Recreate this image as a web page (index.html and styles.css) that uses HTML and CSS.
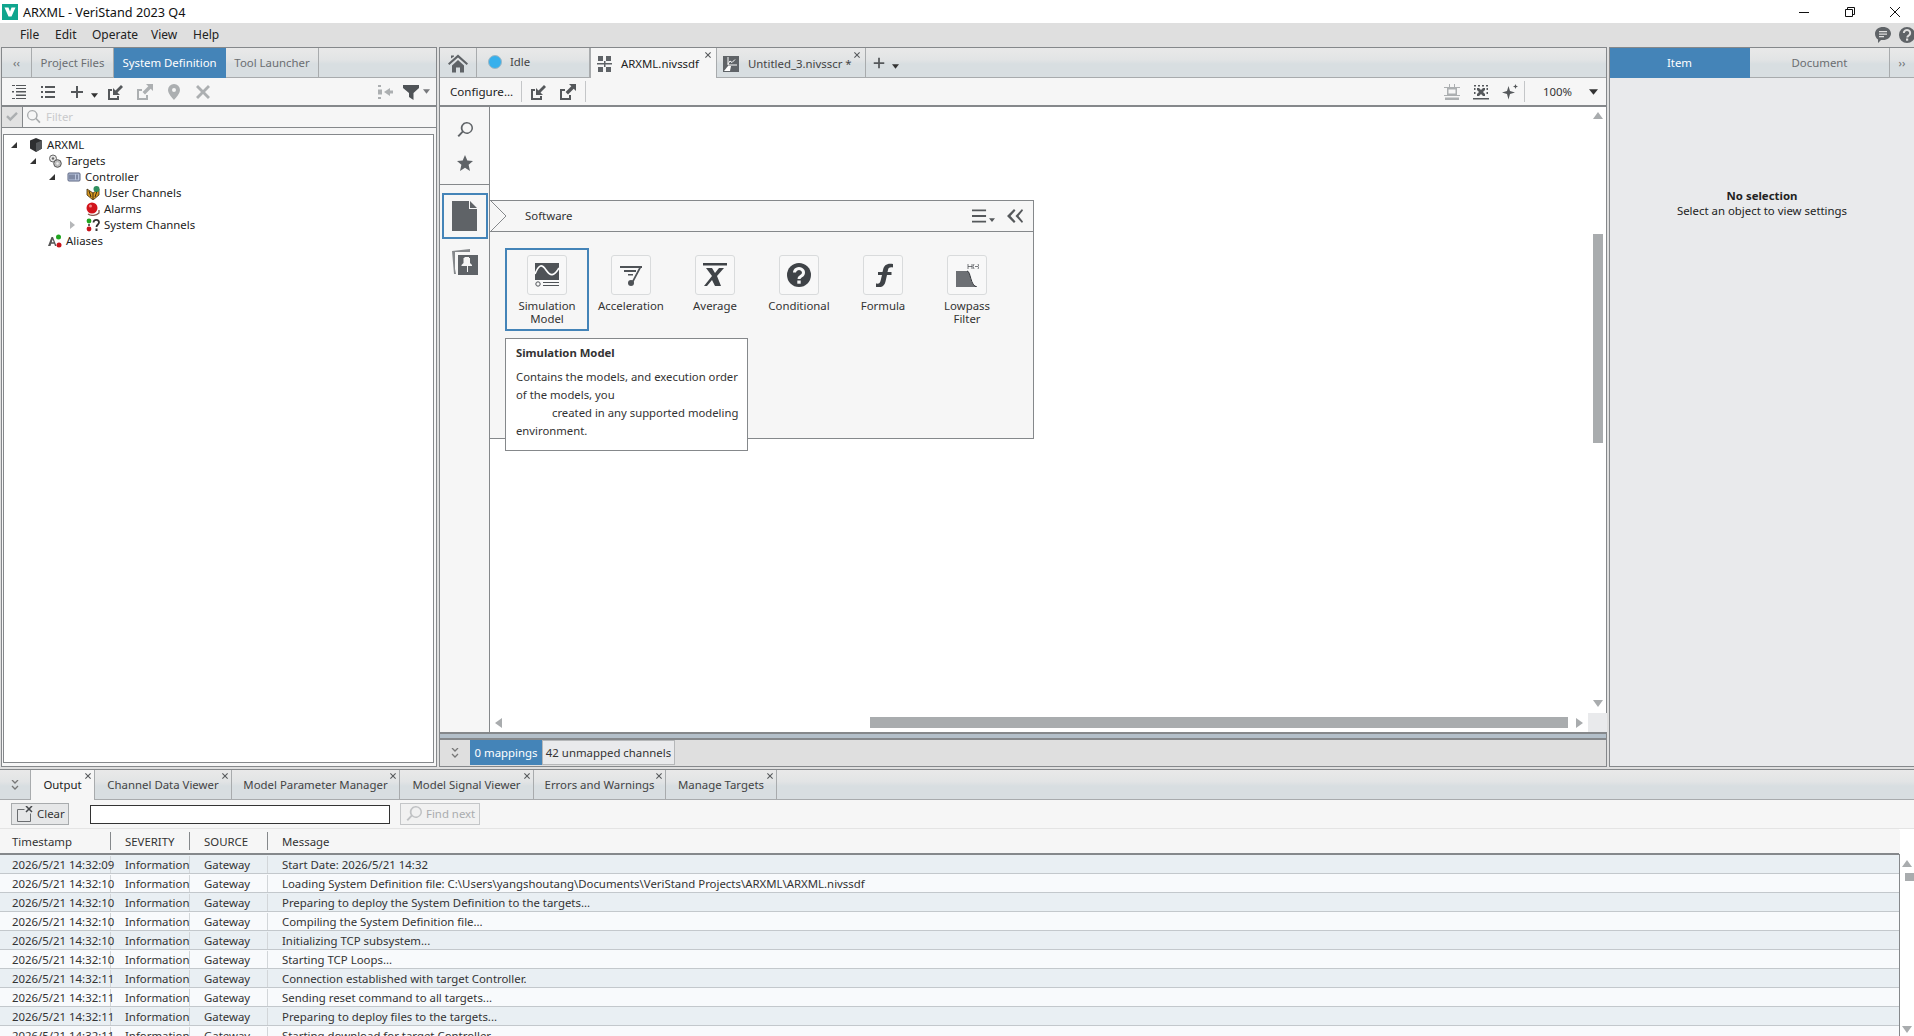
FILE: index.html
```html
<!DOCTYPE html>
<html lang="en">
<head>
<meta charset="utf-8">
<title>ARXML - VeriStand 2023 Q4</title>
<link rel="stylesheet" href="styles.css">
</head>
<body>
<svg class="sprite" aria-hidden="true">
  <symbol id="i-import" viewBox="0 0 16 16"><path d="M0 5h4v2H2v7h7v-2h2v4H0z"/><path d="M5 11V4l2.500 2.500L13 1l2 2-5.500 5.500L12 11z"/></symbol>
  <symbol id="i-export" viewBox="0 0 16 16"><path d="M0 5h5v2H2v7h7v-3h2v5H0z"/><path d="M16 0v7l-2.300-2.300L8 10.400 5.600 8l5.700-5.700L9 0z"/></symbol>
  <symbol id="i-expand" viewBox="0 0 16 16"><path d="M1 1h3v1H1zM1 14h3v1H1zM5 1h10v1H5zM5 4h10v1H5zM5 7h10v1.500H5zM5 10.500h10V12H5zM5 14h10v1H5zM1 7h2v1.500H1z"/></symbol>
  <symbol id="i-list" viewBox="0 0 16 16"><path d="M1 2h2v2H1zM5 2h10v2H5zM1 7h2v2H1zM5 7h10v2H5zM1 12h2v2H1zM5 12h10v2H5z"/></symbol>
  <symbol id="i-plus" viewBox="0 0 16 16"><path d="M7 2h2v5h5v2H9v5H7V9H2V7h5z"/></symbol>
  <symbol id="i-caret" viewBox="0 0 8 5"><path d="M0 0h8L4 5z"/></symbol>
  <symbol id="i-pin" viewBox="0 0 16 16"><path fill-rule="evenodd" d="M8 0a6 6 0 0 1 6 6c0 3.500-4 7.500-6 10-2-2.500-6-6.500-6-10a6 6 0 0 1 6-6zm0 4a2 2 0 1 0 0 4 2 2 0 0 0 0-4z"/></symbol>
  <symbol id="i-x" viewBox="0 0 16 16"><path d="M3 1l5 5 5-5 2 2-5 5 5 5-2 2-5-5-5 5-2-2 5-5-5-5z"/></symbol>
  <symbol id="i-collapse" viewBox="0 0 16 16"><path d="M7 8l6-4v2.500h3v3h-3V12zM1 1h3v2H1zM1 5.500h4v5H1zM1 13h3v2H1z" /></symbol>
  <symbol id="i-funnel" viewBox="0 0 16 16"><path d="M0 1h16v3l-5.500 5v7L6 13V9L0 4z"/></symbol>
  <symbol id="i-search" viewBox="0 0 16 16"><path fill-rule="evenodd" d="M10 0a6 6 0 1 1-3.900 10.600L2 15l-1.500-1.300 4.300-4.400A6 6 0 0 1 10 0zm0 1.500a4.500 4.500 0 1 0 0 9 4.500 4.500 0 0 0 0-9z"/></symbol>
  <symbol id="i-star" viewBox="0 0 16 16"><path d="M8 0l2.300 5.600 5.700.4-4.400 3.800L13 16 8 12.700 3 16l1.400-6.200L0 6l5.700-.4z"/></symbol>
  <symbol id="i-home" viewBox="0 0 20 18"><path d="M10 0l10 9-1.300 1.500L10 3 1.300 10.500 0 9zM3 4V1h3v1zM4 11l6-5.500 6 5.500v7h-4v-5H8v5H4z"/></symbol>
  <symbol id="i-doc" viewBox="0 0 25 30"><path d="M0 0h17v8h8v22H0zM18 0l7 7h-7z"/></symbol>
  <symbol id="i-pinned" viewBox="0 0 26 26"><path d="M0 2l18-2v3H3v17l1 5-2 0z" opacity=".75"/><path fill-rule="evenodd" d="M6 6h20v20H6zm11 2v1h1v5l2 2v1h-4v6h-1v-6H9.500v-1l2-2V9h1V8z"/></symbol>
  <symbol id="i-menu" viewBox="0 0 16 14"><path d="M0 0h15v2H0zM0 6h15v2H0zM0 12h15v2H0z"/></symbol>
  <symbol id="i-dbl" viewBox="0 0 16 14"><path d="M7 0l1.500 1.500L3.500 7l5 5.500L7 14 0 7zM15 0l1 1.500L11.500 7l4.500 5.500L15 14 8.500 7z"/></symbol>
  <symbol id="i-center" viewBox="0 0 16 16"><path d="M0 3h16v1H0zM5 0h1v3H5zM10 0h1v3h-1zM0 11h16v1H0zM1 13.500h14V16H1z"/><path fill-rule="evenodd" d="M3 4h10v7H3zm1.500 1.500v4h7v-4z"/></symbol>
  <symbol id="i-fit" viewBox="0 0 16 16"><path d="M1 1h2v1.500H1zM5 1h2v1.500H5zM9 1h2v1.500H9zM13 1h2v1.500h-2zM1 4h1.500v2H1zM13.500 4H15v2h-1.500zM1 8h1.500v2H1zM13.500 8H15v2h-1.500zM0 14h16v1.500H0z"/><path d="M4 4l2 0 2 2 2-2h2v2l-2 2 2 2v2h-2L8 10l-2 2H4v-2l2-2-2-2z"/></symbol>
  <symbol id="i-spark" viewBox="0 0 16 16"><path d="M6.500 2l1.500 5 5 1.500-5 1.500-1.500 5.500L5 10 0 8.500 5 7zM13.500 0l.7 1.800L16 2.500l-1.800.7-.7 1.800-.7-1.800-1.800-.7 1.800-.7z"/></symbol>
  <symbol id="i-close" viewBox="0 0 8 8"><path d="M0 1l1-1 3 3 3-3 1 1-3 3 3 3-1 1-3-3-3 3-1-1 3-3z"/></symbol>
  <symbol id="i-check" viewBox="0 0 14 12"><path d="M0 6l2-2 3 3 7-7 2 2-9 9z"/></symbol>
  <symbol id="i-dchev" viewBox="0 0 8 10"><path d="M1 0l3 3 3-3M1 6l3 3 3-3" fill="none" stroke="currentColor" stroke-width="1.300"/></symbol>
</svg>

<header class="titlebar">
  <svg class="logo" viewBox="0 0 16 16"><rect width="16" height="16" fill="#0fa58e"/><path d="M2.500 3.500h4l1.500 4 1.500-4h4L9.500 12.500h-3z" fill="#fff"/></svg>
  <span class="title">ARXML - VeriStand 2023 Q4</span>
  <div class="winctl">
    <svg class="win" viewBox="0 0 12 12"><path d="M1 6.500h10" stroke="#111" fill="none"/></svg>
    <svg class="win" viewBox="0 0 12 12"><path d="M1.500 3.500h7v7h-7zM3.500 3.500v-2h7v7h-2" stroke="#111" fill="none"/></svg>
    <svg class="win" viewBox="0 0 12 12"><path d="M1 1l10 10M11 1L1 11" stroke="#111" fill="none"/></svg>
  </div>
</header>

<nav class="menubar">
  <span class="menu m-file">File</span><span class="menu m-edit">Edit</span><span class="menu m-op">Operate</span><span class="menu m-view">View</span><span class="menu">Help</span>
  <div class="menu-right">
    <svg class="help-ic" viewBox="0 0 16 16"><path d="M8 0c4.400 0 8 2.700 8 6.500S12.400 13 8 13H6l-3 3v-3.600C1.200 11.300 0 9.200 0 6.500 0 2.700 3.600 0 8 0z" fill="#5f6367"/><path d="M4 4h8v1.300H4zM4 6.500h8v1.300H4zM4 9h5v1.200H4z" fill="#dfdfdf"/></svg>
    <svg class="help-ic" viewBox="0 0 16 16"><circle cx="8" cy="8" r="8" fill="#5f6367"/><path d="M4.800 6a3.200 3 0 1 1 4.800 2.600c-1 .6-1.300 1-1.300 2" fill="none" stroke="#dfdfdf" stroke-width="2"/><rect x="7" y="11.500" width="2.200" height="2.200" fill="#dfdfdf"/></svg>
  </div>
</nav>

<main class="workspace">
  <section class="pane left">
    <div class="tabs">
      <span class="tab collapse">‹‹</span>
      <span class="tab w-project">Project Files</span>
      <span class="tab on w-sysdef">System Definition</span>
      <span class="tab w-tool">Tool Launcher</span>
    </div>
    <div class="toolbar">
      <span class="tool"><svg class="ic"><use href="#i-expand"/></svg></span>
      <span class="tool"><svg class="ic"><use href="#i-list"/></svg></span>
      <span class="tool"><svg class="ic"><use href="#i-plus"/></svg></span>
      <span class="caretbox"><svg class="caret"><use href="#i-caret"/></svg></span>
      <span class="tool"><svg class="ic"><use href="#i-import"/></svg></span>
      <span class="tool off"><svg class="ic"><use href="#i-export"/></svg></span>
      <span class="tool off"><svg class="ic"><use href="#i-pin"/></svg></span>
      <span class="tool off"><svg class="ic"><use href="#i-x"/></svg></span>
      <span class="spacer"></span>
      <span class="tool off"><svg class="ic"><use href="#i-collapse"/></svg></span>
      <span class="tool funnel"><svg class="ic"><use href="#i-funnel"/></svg></span>
      <span class="caretbox off"><svg class="caret"><use href="#i-caret"/></svg></span>
    </div>
    <div class="filter">
      <span class="check"><svg class="check-ic"><use href="#i-check"/></svg></span>
      <span class="filter-input"><svg class="filter-ic"><use href="#i-search"/></svg>Filter</span>
    </div>
    <div class="tree">
      <div class="node l0"><span class="arr open"></span>
        <svg class="ti" viewBox="0 0 14 14"><path d="M7 0l6 2.500v8L7 14 1 10.500v-8z" fill="#2e2f31"/><path d="M7 5l6-2.500v8L7 14z" fill="#55585b"/></svg><span>ARXML</span></div>
      <div class="node l1"><span class="arr open"></span>
        <svg class="ti" viewBox="0 0 14 14"><circle cx="5" cy="4.500" r="3.500" fill="#e5e5e5" stroke="#666"/><circle cx="9.500" cy="9.500" r="3.800" fill="#bbb" stroke="#555"/><circle cx="5" cy="4.500" r="1.200" fill="#666"/><circle cx="9.500" cy="9.500" r="1.200" fill="#eee"/></svg><span>Targets</span></div>
      <div class="node l2"><span class="arr open"></span>
        <svg class="ti" viewBox="0 0 14 14"><rect x="1" y="3" width="12" height="8" rx="1" fill="#b9c4dc" stroke="#5a6480"/><path d="M3 4.500v5M5 4.500v5M7 4.500v5M10 4.500v5" stroke="#46506c"/></svg><span>Controller</span></div>
      <div class="node l3"><span class="arr"></span>
        <svg class="ti" viewBox="0 0 14 14"><path d="M1 3l6 4 6-4v6l-6 5-6-5z" fill="#d99a22" stroke="#3b2c10" stroke-width=".8"/><path d="M3 5l2 6M7 7v6M11 5l-2 6" stroke="#3b2c10"/><circle cx="10.500" cy="3" r="3" fill="#2f8f5f"/></svg><span>User Channels</span></div>
      <div class="node l3"><span class="arr"></span>
        <svg class="ti" viewBox="0 0 14 14"><circle cx="6" cy="6" r="5.500" fill="#d2141c"/><circle cx="4.500" cy="4" r="1.500" fill="#f28a8a"/><path d="M2 12c3 2 8 2 11-1V8" stroke="#8a5a50" fill="none" stroke-width="1.300"/></svg><span>Alarms</span></div>
      <div class="node l3"><span class="arr closed"></span>
        <svg class="ti" viewBox="0 0 14 14"><circle cx="3" cy="3" r="2.400" fill="#1fa51f"/><circle cx="3" cy="11" r="2.400" fill="#c8141c"/><circle cx="3" cy="7" r="1" fill="#333"/><path d="M7.500 4.500c0-3.500 5.500-3.500 5.500 0 0 2-2.500 2-2.500 4.500" fill="none" stroke="#333" stroke-width="1.800"/><rect x="9.500" y="10.500" width="2" height="2.500" fill="#333"/></svg><span>System Channels</span></div>
      <div class="node l1"><span class="arr"></span>
        <svg class="ti" viewBox="0 0 14 14"><path d="M0 12L3.500 3h1.500l3.500 9H7l-.8-2.300H3.200L2.500 12zM3.700 8.300h2L4.700 5.500z" fill="#555"/><circle cx="10.500" cy="3" r="2.500" fill="#1fa51f"/><circle cx="11" cy="11" r="2.500" fill="#c8141c"/></svg><span>Aliases</span></div>
    </div>
  </section>

  <section class="pane center">
    <div class="tabs">
      <span class="tab home"><svg class="home-ic"><use href="#i-home"/></svg></span>
      <span class="tab idle"><i class="dot"></i>Idle</span>
      <span class="tab doc active">
        <svg class="doc-ic" viewBox="0 0 16 16"><path d="M1 0h5v5H1zM9 0h5v5H9zM1 11h5v5H1zM9 11h5v5H9zM0 7h15v1.500H0zM7 5h1.500v6H7z" fill="#5f6367"/></svg>ARXML.nivssdf
        <svg class="tab-x"><use href="#i-close"/></svg></span>
      <span class="tab doc second">
        <svg class="doc-ic" viewBox="0 0 16 16"><rect width="16" height="16" fill="#5f6367"/><path d="M5 1v8h9M5 8l2-3 2 1.500 3-3" stroke="#fff" fill="none"/><path d="M1 15l4-5h3l-1 5z" fill="#fff"/></svg>Untitled_3.nivsscr *
        <svg class="tab-x"><use href="#i-close"/></svg></span>
      <span class="tab-add"><svg class="add-ic"><use href="#i-plus"/></svg><svg class="caret"><use href="#i-caret"/></svg></span>
    </div>
    <div class="toolbar">
      <span class="configure">Configure...</span>
      <i class="sep"></i>
      <span class="tool first"><svg class="ic"><use href="#i-import"/></svg></span>
      <span class="tool"><svg class="ic"><use href="#i-export"/></svg></span>
      <i class="sep after"></i>
      <span class="spacer"></span>
      <span class="tool off"><svg class="ic"><use href="#i-center"/></svg></span>
      <span class="tool"><svg class="ic"><use href="#i-fit"/></svg></span>
      <span class="tool"><svg class="ic"><use href="#i-spark"/></svg></span>
      <i class="sep"></i>
      <span class="zoomval">100%</span>
      <svg class="zoom-caret"><use href="#i-caret"/></svg>
    </div>
    <div class="stage">
      <aside class="rail">
        <span class="rail-btn"><svg class="rail-ic"><use href="#i-search"/></svg></span>
        <span class="rail-btn"><svg class="rail-ic"><use href="#i-star"/></svg></span>
        <i class="rail-div"></i>
        <span class="rail-doc"><svg class="rail-docic"><use href="#i-doc"/></svg></span>
        <span class="rail-pin"><svg class="rail-pinic"><use href="#i-pinned"/></svg></span>
      </aside>
      <div class="canvas">
        <div class="view">
          <div class="palette">
            <div class="pal-head">
              <svg class="pal-notch" viewBox="0 0 18 32"><path d="M0 0l16 16L0 32" fill="#fff" stroke="#85888b"/><path d="M0 1l15 15L0 31z" fill="#f6f6f6"/></svg>
              <span class="pal-name">Software</span>
              <span class="spacer"></span>
              <svg class="pal-menu"><use href="#i-menu"/></svg>
              <svg class="pal-caret"><use href="#i-caret"/></svg>
              <svg class="pal-dbl"><use href="#i-dbl"/></svg>
            </div>
            <div class="pal-items">
              <div class="pal-item sel">
                <span class="pal-ic"><svg viewBox="0 0 24 24"><rect x="0" y="0" width="24" height="17" fill="#4f5357"/><path d="M0 11c4-10 7-10 11-4s8 7 13-2" stroke="#fff" stroke-width="1.600" fill="none"/><circle cx="3" cy="21" r="2.200" fill="none" stroke="#4f5357"/><path d="M8 19.500h16M8 22.500h16" stroke="#4f5357"/></svg></span>
                <span class="pal-label">Simulation<br>Model</span>
              </div>
              <div class="pal-item">
                <span class="pal-ic"><svg viewBox="0 0 24 24"><path d="M1 3h22v2H1zM5 7h12v2H5zM9 11h5v1.500H9zM23 3l-9 17h-2l9-17z" fill="#4f5357"/><circle cx="12" cy="20" r="3" fill="#4f5357"/></svg></span>
                <span class="pal-label">Acceleration</span>
              </div>
              <div class="pal-item">
                <span class="pal-ic"><svg viewBox="0 0 24 24"><rect x="0" y="0" width="24" height="2.500" fill="#3f4347"/><path d="M3 5h6l3 5 4-5h5l-7 8 4 10h-6l-3-6-5 6H1l8-10z" fill="#3f4347"/></svg></span>
                <span class="pal-label">Average</span>
              </div>
              <div class="pal-item">
                <span class="pal-ic"><svg viewBox="0 0 24 24"><circle cx="12" cy="12" r="12" fill="#3f4347"/><path d="M7.500 9.500a4.500 4 0 1 1 6.800 3.500c-1.500 1-2.300 1.500-2.300 3" fill="none" stroke="#f8f8f8" stroke-width="3"/><rect x="10.300" y="17.500" width="3.400" height="3.200" fill="#f8f8f8"/></svg></span>
                <span class="pal-label">Conditional</span>
              </div>
              <div class="pal-item">
                <span class="pal-ic"><svg viewBox="0 0 24 24"><path d="M22 1c-6-1-9 1-10 6l-.5 2H7v3h4l-1.500 6c-.5 2-1.500 3-4.500 2.500V24c6 1 8.500-1 9.500-5.500L16 12h4.500V9H16.500l.5-2c.3-2 1.500-3 5-2.500z" fill="#3f4347"/></svg></span>
                <span class="pal-label">Formula</span>
              </div>
              <div class="pal-item">
                <span class="pal-ic"><svg viewBox="0 0 24 24"><path d="M13 1v5M17 1v5M13 3.500h4M19 1l-1 2.500 1 2.500M23 1l1 2.500-1 2.500M20 3.500h3" stroke="#3f4347" stroke-width=".7" fill="none"/><path d="M1 8h11c4 0 3 15 9 15v1H1z" fill="#6d7074"/><path d="M12 8c4 0 3 15 10 16" stroke="#33363a" fill="none"/></svg></span>
                <span class="pal-label">Lowpass<br>Filter</span>
              </div>
            </div>
          </div>
          <div class="tooltip">
            <div class="tip-title">Simulation Model</div>
            <div class="tip-body">Contains the models, and execution order<br>of the models, you<br><span class="tip-indent">created in any supported modeling</span><br>environment.</div>
          </div>
        </div>
        <div class="vscroll">
          <i class="arrow-up"></i>
          <i class="vthumb"></i>
          <i class="arrow-down"></i>
        </div>
        <div class="hscroll">
          <i class="arrow-left"></i>
          <i class="hthumb"></i>
          <i class="arrow-right"></i>
        </div>
        <div class="corner"></div>
      </div>
    </div>
    <div class="band"></div>
    <div class="status">
      <span class="status-exp"><svg class="dchev"><use href="#i-dchev"/></svg></span>
      <span class="status-on">0 mappings</span>
      <span class="status-off">42 unmapped channels</span>
    </div>
  </section>

  <section class="pane right">
    <div class="tabs">
      <span class="tab on w-half">Item</span>
      <span class="tab w-half">Document</span>
      <span class="tab collapse-r">››</span>
    </div>
    <div class="noselect">
      <strong>No selection</strong>
      <span>Select an object to view settings</span>
    </div>
  </section>
</main>

<section class="bottom">
  <div class="tabs">
    <span class="tab b-exp"><svg class="dchev"><use href="#i-dchev"/></svg></span>
    <span class="tab btab active w-output">Output<svg class="tab-x"><use href="#i-close"/></svg></span>
    <span class="tab btab w-cdv">Channel Data Viewer<svg class="tab-x"><use href="#i-close"/></svg></span>
    <span class="tab btab w-mpm">Model Parameter Manager<svg class="tab-x"><use href="#i-close"/></svg></span>
    <span class="tab btab w-msv">Model Signal Viewer<svg class="tab-x"><use href="#i-close"/></svg></span>
    <span class="tab btab w-eaw">Errors and Warnings<svg class="tab-x"><use href="#i-close"/></svg></span>
    <span class="tab btab w-mt">Manage Targets<svg class="tab-x"><use href="#i-close"/></svg></span>
  </div>
  <div class="out-tools">
    <span class="btn clear"><svg class="btn-ic" viewBox="0 0 16 16"><path d="M0.500 3.500h7M0.500 3.500v12h13v-8" stroke="#6a6d70" fill="none"/><path d="M9 0l6 6M15 0L9 6" stroke="#45484b" stroke-width="1.500"/></svg>Clear</span>
    <span class="find-input"></span>
    <span class="btn find"><svg class="btn-ic dim" viewBox="0 0 16 16"><use href="#i-search"/></svg>Find next</span>
  </div>
  <div class="log">
    <div class="log-main">
      <div class="lrow head"><span>Timestamp</span><span>SEVERITY</span><span>SOURCE</span><span>Message</span></div>
      <div class="lrow"><span>2026/5/21 14:32:09</span><span>Information</span><span>Gateway</span><span>Start Date: 2026/5/21 14:32</span></div>
      <div class="lrow"><span>2026/5/21 14:32:10</span><span>Information</span><span>Gateway</span><span>Loading System Definition file: C:\Users\yangshoutang\Documents\VeriStand Projects\ARXML\ARXML.nivssdf</span></div>
      <div class="lrow"><span>2026/5/21 14:32:10</span><span>Information</span><span>Gateway</span><span>Preparing to deploy the System Definition to the targets...</span></div>
      <div class="lrow"><span>2026/5/21 14:32:10</span><span>Information</span><span>Gateway</span><span>Compiling the System Definition file...</span></div>
      <div class="lrow"><span>2026/5/21 14:32:10</span><span>Information</span><span>Gateway</span><span>Initializing TCP subsystem...</span></div>
      <div class="lrow"><span>2026/5/21 14:32:10</span><span>Information</span><span>Gateway</span><span>Starting TCP Loops...</span></div>
      <div class="lrow"><span>2026/5/21 14:32:11</span><span>Information</span><span>Gateway</span><span>Connection established with target Controller.</span></div>
      <div class="lrow"><span>2026/5/21 14:32:11</span><span>Information</span><span>Gateway</span><span>Sending reset command to all targets...</span></div>
      <div class="lrow"><span>2026/5/21 14:32:11</span><span>Information</span><span>Gateway</span><span>Preparing to deploy files to the targets...</span></div>
      <div class="lrow"><span>2026/5/21 14:32:11</span><span>Information</span><span>Gateway</span><span>Starting download for target Controller...</span></div>
    </div>
    <div class="log-scroll">
      <i class="arrow-up"></i>
      <i class="lthumb"></i>
      <i class="spacer"></i>
      <i class="arrow-down"></i>
    </div>
  </div>
</section>
</body>
</html>
```
FILE: styles.css
```css
* { box-sizing: border-box; }
html, body { margin: 0; height: 1036px; overflow: hidden; }
body {
  display: flex; flex-direction: column; width: 1914px;
  font: 11.4px/16px "Noto Sans", "Open Sans", sans-serif;
  color: #222; background: #dfdfdf;
}
.sprite { position: absolute; width: 0; height: 0; }
svg { fill: currentColor; display: block; flex: none; }
.spacer { flex: 1; }

.titlebar { height: 23px; background: #fff; display: flex; align-items: center; padding-left: 2px; flex: none; }
.logo { width: 16px; height: 16px; }
.title { margin-left: 5px; font-size: 12.7px; color: #111; }
.winctl { margin-left: auto; display: flex; gap: 33.500px; padding-right: 13px; }
.win { width: 12px; height: 12px; }

.menubar { height: 24px; display: flex; align-items: center; padding-left: 20px; flex: none; background: #dfdfdf; position: relative; }
.menu { color: #222; font-size: 12px; }
.m-file { width: 35px; }
.m-edit { width: 37px; }
.m-op { width: 59px; }
.m-view { width: 42px; }
.menu-right { margin-left: auto; display: flex; gap: 8px; margin-right: -1px; }
.help-ic { width: 16px; height: 16px; }

.workspace { height: 722px; flex: none; display: flex; gap: 2px; padding-left: 1px; }
.pane { border: 1px solid #85888b; display: flex; flex-direction: column; background: #f6f6f6; height: 720px; }
.left { width: 436px; }
.center { width: 1168px; }
.right { width: 305px; flex: none; background: #e9eaec; border-right: 0; }

.tabs {
  height: 30px; flex: none; display: flex;
  background: linear-gradient(#e9e9e9 0, #e2e4e5 40%, #d8dee1 55%, #d8dee1 100%);
  border-bottom: 1px solid #a8abad;
}
.tab {
  display: flex; align-items: center; justify-content: center; height: 30px; position: relative;
  border-right: 1px solid #a8abad; color: #6b6e71; flex: none; white-space: nowrap;
}
.tab.on { background: #4484b8; color: #fff; border-right-color: #4484b8; }
.tab.active { background: #f6f6f6; color: #222; }
.collapse { width: 30px; font-size: 11px; }
.collapse-r { flex: 1; font-size: 11px; border-right: 0; }
.w-project { width: 82px; }
.w-sysdef { width: 112px; }
.w-tool { width: 93px; }
.w-half { width: 140px; }

.home { width: 37px; }
.home-ic { width: 20px; height: 19px; color: #5f6367; }
.idle { width: 113px; justify-content: flex-start; padding-left: 11px; color: #444; padding-bottom: 2px; }
.dot { width: 14px; height: 14px; border-radius: 50%; background: #37b0ec; margin-right: 8px; border: 1px solid #9fb7c4; }
.doc { justify-content: flex-start; padding: 2px 0 0 6px; color: #444; }
.doc.active { width: 127px; border-left: 1px solid #a8abad; }
.second { width: 149px; }
.doc-ic { width: 16px; height: 16px; margin-right: 8px; }
.second .doc-ic { margin-right: 9px; }
.tab-x { position: absolute; right: 5px; top: 4px; width: 6px; height: 6px; color: #55585b; }
.tab-add { display: flex; align-items: center; padding-left: 6px; color: #55585b; }
.add-ic { width: 14px; height: 14px; margin-right: 6px; }
.tab-add .caret { margin-top: 8px; }

.toolbar { flex: none; display: flex; align-items: center; border-bottom: 2px solid #85888b; background: #f6f6f6; padding-left: 2px; height: 29px; color: #55585b; }
.tool { width: 29px; display: flex; justify-content: center; }
.tool.off { color: #acafb1; }
.tool.first { margin-left: 2px; }
.ic { width: 16px; height: 16px; }
.caretbox { width: 10px; padding-top: 8px; }
.caretbox.off { color: #8b8e91; margin-right: 3px; padding-top: 0; }
.caret { width: 7px; height: 5px; color: #333; }
.caretbox.off .caret { color: #77797c; }
.funnel { width: 24px; color: #4f5357; }
.configure { width: 79px; padding-left: 8px; color: #222; font-size: 11.6px; }
.sep { width: 1px; height: 21px; background: #c4c6c8; flex: none; }
.sep.after { margin-left: 3px; }
.zoomval { width: 65px; text-align: center; color: #333; }
.zoom-caret { width: 9px; height: 6px; color: #333; margin: 0 8px 0 -1px; }

.filter { height: 21px; flex: none; display: flex; background: #e2e2e2; border-bottom: 1px solid #85888b; }
.check { width: 21px; display: flex; align-items: center; justify-content: center; color: #acafb1; border-right: 1px solid #85888b; }
.check-ic { width: 12px; height: 10px; }
.filter-input { flex: 1; display: flex; align-items: center; background: #f6f6f6; color: #c9cacc; gap: 5px; padding-left: 4px; }
.filter-ic { width: 14px; height: 14px; color: #a9acae; transform: scaleX(-1); }

.tree { flex: 1; margin: 6px 2px 3px 1px; border: 1px solid #85888b; background: #fff; padding-top: 2px; }
.node { height: 16px; display: flex; align-items: center; color: #222; }
.l0 { padding-left: 6px; }
.l1 { padding-left: 25px; }
.l2 { padding-left: 44px; }
.l3 { padding-left: 63px; }
.arr { width: 19px; height: 8px; position: relative; flex: none; }
.arr.open::before { content: ""; position: absolute; left: 1px; top: 1px; border-style: solid; border-width: 0 0 6px 6px; border-color: transparent transparent #333 transparent; }
.arr.closed::before { content: ""; position: absolute; left: 3px; top: 0; border-style: solid; border-width: 4px 0 4px 5px; border-color: transparent transparent transparent #b5b7b9; }
.ti { width: 14px; height: 14px; margin-right: 4px; }

.stage { flex: 1; display: flex; min-height: 0; }
.rail { width: 50px; flex: none; border-right: 1px solid #85888b; display: flex; flex-direction: column; align-items: center; background: #f6f6f6; }
.rail-btn { height: 33px; display: flex; align-items: center; justify-content: center; color: #5f6367; padding-top: 12px; }
.rail-ic { width: 16px; height: 16px; }
.rail-div { height: 1px; align-self: stretch; background: #85888b; margin: 11px 0 8px; }
.rail-doc { width: 46px; height: 46px; border: 2px solid #4484b8; display: flex; align-items: center; justify-content: center; color: #5f6367; }
.rail-docic { width: 25px; height: 30px; }
.rail-pin { margin-top: 10px; color: #5f6367; }
.rail-pinic { width: 26px; height: 26px; }

.canvas { flex: 1; display: grid; grid-template-columns: 1fr 19px; grid-template-rows: 1fr 19px; background: #fff; min-width: 0; }
.view { position: relative; }
.vscroll { display: flex; flex-direction: column; align-items: center; padding-top: 5px; }
.hscroll { display: flex; align-items: center; padding: 0 5px; }
.corner { background: #e9eaec; }
.arrow-up { width: 0; height: 0; border: 5px solid transparent; border-top: 0; border-bottom: 7px solid #a9acae; }
.arrow-down { width: 0; height: 0; border: 5px solid transparent; border-bottom: 0; border-top: 7px solid #a9acae; }
.arrow-left { width: 0; height: 0; border: 5px solid transparent; border-left: 0; border-right: 7px solid #a9acae; }
.arrow-right { width: 0; height: 0; border: 5px solid transparent; border-right: 0; border-left: 7px solid #a9acae; margin-left: 8px; }
.vthumb { width: 10px; height: 209px; background: #a9acae; margin: 115px 0 257px; }
.hthumb { height: 11px; width: 698px; background: #a9acae; margin-left: 368px; }

.palette { position: absolute; left: 0; top: 93px; width: 544px; height: 239px; background: #f6f6f6; border: 1px solid #85888b; border-left: 0; }
.pal-head { height: 31px; display: flex; align-items: center; border-bottom: 1px solid #85888b; padding-right: 10px; color: #55585b; position: relative; }
.pal-notch { width: 18px; height: 32px; position: absolute; left: 0; top: -1px; }
.pal-name { margin-left: 35px; color: #333; }
.pal-menu { width: 15px; height: 14px; margin-left: -3px; }
.pal-caret { width: 6px; height: 4px; margin: 8px 12px 0 2px; }
.pal-dbl { width: 16px; height: 14px; }
.pal-items { display: flex; padding: 16px 0 0 15px; }
.pal-item { width: 84px; height: 83px; display: flex; flex-direction: column; align-items: center; padding-top: 7px; border: 2px solid transparent; flex: none; color: #333; line-height: 13px; text-align: center; }
.pal-item.sel { border-color: #4484b8; }
.pal-ic { width: 40px; height: 40px; border: 1px solid #d9dbdc; border-radius: 3px; background: #f8f8f8; display: flex; align-items: center; justify-content: center; margin-top: -2px; }
.pal-ic svg { width: 24px; height: 24px; }
.pal-label { margin-top: 4px; }

.tooltip { position: absolute; left: 15px; top: 231px; width: 243px; height: 113px; background: #fff; border: 1px solid #85888b; padding: 6px 8px 0 10px; color: #333; font-size: 11.3px; }
.tip-title { font-weight: 700; line-height: 16px; margin-bottom: 7px; }
.tip-body { line-height: 18px; white-space: nowrap; }
.tip-indent { padding-left: 36px; }

.band { height: 8px; flex: none; background: #b3bfc9; border-top: 2px solid #85888b; border-bottom: 2px solid #85888b; }
.status { height: 26px; flex: none; display: flex; align-items: stretch; background: #dfdfdf; color: #333; padding-bottom: 1px; white-space: nowrap; }
.status-exp { width: 30px; display: flex; align-items: center; justify-content: center; color: #777; }
.dchev { width: 8px; height: 10px; }
.status-on { width: 72px; background: #4484b8; color: #fff; display: flex; align-items: center; justify-content: center; }
.status-off { width: 133px; border: 1px solid #b5b7b9; display: flex; align-items: center; justify-content: center; background: #e9eaec; }
.noselect { flex: 1; display: flex; flex-direction: column; align-items: center; padding: 110px 0 0 0; color: #222; line-height: 15px; }
.noselect strong { font-weight: 700; }

.bottom { flex: 1; min-height: 0; display: flex; flex-direction: column; border-top: 1px solid #85888b; background: #f6f6f6; }
.b-exp { width: 31px; color: #777; }
.btab { color: #444; }
.btab.active { border-right: 1px solid #a8abad; }
.w-output { width: 64px; }
.w-cdv { width: 137px; }
.w-mpm { width: 168px; }
.w-msv { width: 134px; }
.w-eaw { width: 132px; }
.w-mt { width: 111px; }
.bottom .tab-x { top: 3px; right: 3px; }
.out-tools { height: 29px; flex: none; display: flex; align-items: center; padding-left: 11px; border-bottom: 1px solid #e4e4e4; box-shadow: 0 1px 0 #fff; }
.btn { height: 22px; border: 1px solid #c4c6c8; display: flex; align-items: center; gap: 4px; padding-left: 5px; flex: none; }
.clear { width: 58px; background: #e6e7e8; border-color: #a8abad; color: #333; }
.find { width: 80px; margin-left: 10px; color: #a9acae; background: #f1f1f1; }
.btn-ic { width: 16px; height: 16px; }
.btn-ic.dim { color: #c0c2c4; }
.find-input { width: 300px; height: 19px; background: #fff; border: 1px solid #333; margin-left: 21px; }

.log { flex: 1; min-height: 0; display: flex; overflow: hidden; }
.log-main { flex: 1; min-width: 0; border-right: 1px solid #85888b; margin-top: 25px; position: relative; }
.lrow { display: grid; grid-template-columns: 111px 79px 78px 1fr; height: 19px; align-items: stretch; border-bottom: 1px solid #c3c8cc; background: #f8fafc; color: #333; white-space: nowrap; }
.lrow:nth-child(even) { background: #e9eff3; }
.lrow span { padding: 1px 0 0 14px; border-right: 1px solid #d2d6d9; margin: 1px 0 0 0; line-height: 16px; }
.lrow span:first-child { padding-left: 12px; }
.lrow span:last-child { border-right: 0; }
.lrow.head { margin-top: -25px; height: 26px; background: #f6f6f6; border-bottom: 2px solid #85888b; padding-top: 2px; }
.lrow.head span { padding-top: 2px; border-right-color: #85888b; margin-bottom: 3px; }
.log-scroll { width: 14px; flex: none; display: flex; flex-direction: column; align-items: center; background: #fff; padding: 31px 0 3px 0; }
.lthumb { width: 9px; height: 8px; background: #a9acae; margin: 6px 0 0 5px; }
.log-scroll .spacer { flex: 1; }
```
